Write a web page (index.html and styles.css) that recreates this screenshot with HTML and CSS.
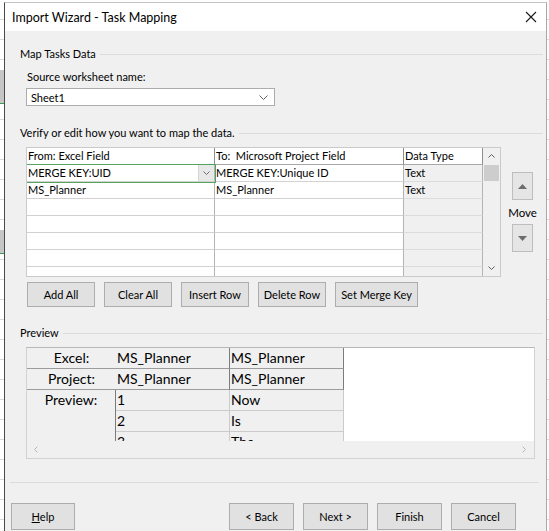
FILE: index.html
```html
<!DOCTYPE html>
<html lang="en">
<head>
  <meta charset="UTF-8" />
  <title>Import Wizard - Task Mapping</title>
  <link rel="stylesheet" href="styles.css">
</head>
<body>
  <div class="window">
    <div class="titlebar">
      <span class="title">Import Wizard - Task Mapping</span>
      <svg class="close" width="12" height="12" viewBox="0 0 12 12">
        <path d="M1 1 L11 11 M11 1 L1 11" stroke="#1a1a1a" stroke-width="1.1" fill="none"/>
      </svg>
    </div>

    <div class="content">
      <div class="group"><span>Map Tasks Data</span></div>
      <div class="field-label">Source worksheet name:</div>
      <div class="select">
        <span>Sheet1</span>
        <svg width="9" height="5" viewBox="0 0 9 5"><path d="M0.5 0.5 L4.5 4.5 L8.5 0.5" stroke="#606060" fill="none"/></svg>
      </div>

      <div class="group group-verify"><span>Verify or edit how you want to map the data.</span></div>

      <div class="map-area">
        <div class="grid">
          <table class="map-table">
            <colgroup>
              <col style="width: 188px">
              <col style="width: 189px">
              <col style="width: 79px">
            </colgroup>
            <thead>
              <tr>
                <th>From: Excel Field</th>
                <th>To:&nbsp; Microsoft Project Field</th>
                <th class="type">Data Type</th>
              </tr>
            </thead>
            <tbody>
              <tr>
                <td class="combo">
                  <div class="combo-box">
                    <span>MERGE KEY:UID</span>
                    <span class="combo-btn">
                      <svg width="7" height="4" viewBox="0 0 7 4"><path d="M0.5 0.5 L3.5 3.5 L6.5 0.5" stroke="#707070" fill="none"/></svg>
                    </span>
                  </div>
                </td>
                <td>MERGE KEY:Unique ID</td>
                <td class="type">Text</td>
              </tr>
              <tr><td>MS_Planner</td><td>MS_Planner</td><td class="type">Text</td></tr>
              <tr><td></td><td></td><td class="type"></td></tr>
              <tr><td></td><td></td><td class="type"></td></tr>
              <tr><td></td><td></td><td class="type"></td></tr>
              <tr><td></td><td></td><td class="type"></td></tr>
              <tr><td></td><td></td><td class="type"></td></tr>
            </tbody>
          </table>
          <div class="vscroll">
            <div class="arrow">
              <svg width="7" height="4" viewBox="0 0 7 4"><path d="M0.5 3.5 L3.5 0.5 L6.5 3.5" stroke="#606060" fill="none"/></svg>
            </div>
            <div class="thumb"></div>
            <div class="track"></div>
            <div class="arrow">
              <svg width="7" height="4" viewBox="0 0 7 4"><path d="M0.5 0.5 L3.5 3.5 L6.5 0.5" stroke="#606060" fill="none"/></svg>
            </div>
          </div>
        </div>

        <div class="move">
          <button class="move-btn">
            <svg width="9" height="5" viewBox="0 0 9 5"><path d="M0 5 L4.5 0 L9 5 Z" fill="#6d6d6d"/></svg>
          </button>
          <span class="move-label">Move</span>
          <button class="move-btn">
            <svg width="9" height="5" viewBox="0 0 9 5"><path d="M0 0 L4.5 5 L9 0 Z" fill="#6d6d6d"/></svg>
          </button>
        </div>
      </div>

      <div class="grid-buttons">
        <button class="btn">Add All</button>
        <button class="btn">Clear All</button>
        <button class="btn">Insert Row</button>
        <button class="btn">Delete Row</button>
        <button class="btn btn-wide">Set Merge Key</button>
      </div>

      <div class="group group-preview"><span>Preview</span></div>

      <div class="preview">
        <div class="preview-view">
          <table class="prev-table">
            <colgroup>
              <col style="width: 89px">
              <col style="width: 114px">
              <col style="width: 114px">
            </colgroup>
            <tr class="head">
              <td class="label">Excel:</td>
              <td class="sep">MS_Planner</td>
              <td class="sep">MS_Planner</td>
            </tr>
            <tr class="head">
              <td class="label">Project:</td>
              <td class="sep">MS_Planner</td>
              <td class="sep">MS_Planner</td>
            </tr>
            <tr>
              <td class="label side" rowspan="3">Preview:</td>
              <td>1</td>
              <td>Now</td>
            </tr>
            <tr><td>2</td><td>Is</td></tr>
            <tr><td>3</td><td>The</td></tr>
          </table>
        </div>
        <div class="hscroll">
          <svg width="4" height="7" viewBox="0 0 4 7"><path d="M3.5 0.5 L0.5 3.5 L3.5 6.5" stroke="#b8b8b8" fill="none"/></svg>
          <svg width="4" height="7" viewBox="0 0 4 7"><path d="M0.5 0.5 L3.5 3.5 L0.5 6.5" stroke="#b8b8b8" fill="none"/></svg>
        </div>
      </div>

      <div class="separator"></div>

      <div class="footer">
        <button class="btn btn-footer"><u>H</u>elp</button>
        <button class="btn btn-footer push">&lt; Back</button>
        <button class="btn btn-footer">Next &gt;</button>
        <button class="btn btn-footer">Finish</button>
        <button class="btn btn-footer">Cancel</button>
      </div>
    </div>
  </div>
</body>
</html>
```

FILE: styles.css
```css
html, body {
  height: 531px;
  overflow: hidden;
}

body {
  margin: 0;
  font-family: Lato, "Noto Sans", sans-serif;
  font-size: 11px;
  color: #000;
  /* excel sheet peeking out behind the dialog */
  background:
    linear-gradient(#c6c6c6, #c6c6c6) 0 70px / 4px 33px no-repeat,
    linear-gradient(#3f9b4f, #3f9b4f) 0 103px / 4px 1px no-repeat,
    linear-gradient(#c6c6c6, #c6c6c6) 0 230px / 4px 23px no-repeat,
    linear-gradient(#3f9b4f, #3f9b4f) 0 253px / 4px 1px no-repeat,
    repeating-linear-gradient(#fff 0, #fff 19px, #d9d9d9 19px, #d9d9d9 20px);
}

.window {
  margin: 2px 2px 0 4px;
  height: 529px;
  border-top: 1px solid #c4c4c4;
  border-left: 1px solid #4a4a4a;
  border-right: 1px solid #a8a8a8;
  display: flex;
  flex-direction: column;
}

.titlebar {
  height: 28px;
  flex: none;
  background: #fff;
  display: flex;
  align-items: center;
  justify-content: space-between;
  padding: 0 9px 0 7px;
}

.title {
  font-size: 12.5px;
}

.content {
  flex: 1;
  background: #f0f0f0;
  padding: 15px 3px 0 15px;
}

/* group headings with a rule running to the right */
.group {
  display: flex;
  align-items: center;
  line-height: 16px;
}

.group::after {
  content: "";
  flex: 1;
  height: 1px;
  margin-left: 4px;
  background: #dcdcdc;
}

.field-label {
  margin: 7px 0 0 7px;
  line-height: 16px;
}

.select {
  margin: 3px 0 0 6px;
  width: 249px;
  height: 18px;
  box-sizing: border-box;
  background: #fff;
  border: 1px solid #acacac;
  display: flex;
  align-items: center;
  justify-content: space-between;
  padding: 0 6px 0 4px;
}

.group-verify {
  margin-top: 19px;
}

.map-area {
  margin: 6px 0 0 6px;
  display: flex;
}

.grid {
  width: 475px;
  height: 130px;
  box-sizing: border-box;
  border: 1px solid #cacaca;
  background: #fff;
  display: flex;
  overflow: hidden;
}

.map-table {
  border-collapse: separate;
  border-spacing: 0;
  table-layout: fixed;
  width: 456px;
  flex: none;
  align-self: flex-start;
}

.map-table th,
.map-table td {
  height: 16px;
  line-height: 16px;
  padding: 0 0 0 1px;
  border-right: 1px solid #b4b4b4;
  border-bottom: 1px solid #d2d2d2;
  white-space: nowrap;
  overflow: hidden;
  text-align: left;
  font-weight: normal;
}

.map-table th {
  background: #fff;
  border-bottom-color: #a8a8a8;
  border-right-color: #8e8e8e;
}

.map-table td.type {
  background: #f0f0f0;
  border-bottom-color: #dcdcdc;
}

.map-table td.combo {
  padding: 0;
  outline: 1px solid #55a35f;
}

.combo-box {
  display: flex;
  justify-content: space-between;
  padding-left: 1px;
}

.combo-btn {
  width: 15px;
  height: 16px;
  background: #e8e8e8;
  border-left: 1px solid #d6d6d6;
  display: flex;
  align-items: center;
  justify-content: center;
}

.vscroll {
  width: 17px;
  flex: none;
  background: #f0f0f0;
  display: flex;
  flex-direction: column;
}

.vscroll .arrow {
  height: 16px;
  display: flex;
  align-items: center;
  justify-content: center;
}

.vscroll .thumb {
  height: 16px;
  margin: 1px 1px 0 1px;
  background: #cdcdcd;
}

.vscroll .track {
  flex: 1;
}

.move {
  width: 27px;
  margin-left: 8px;
  padding-top: 25px;
  display: flex;
  flex-direction: column;
  align-items: center;
}

.move-btn {
  width: 21px;
  height: 28px;
  padding: 0;
  background: #e5e5e5;
  border: 1px solid #bdbdbd;
  display: flex;
  align-items: center;
  justify-content: center;
}

.move-label {
  line-height: 16px;
  margin: 5px 0 3px;
  font-size: 11.5px;
}

.btn {
  font-family: inherit;
  font-size: 11px;
  color: #000;
  background: #e1e1e1;
  border: 1px solid #adadad;
  padding: 0;
  box-sizing: border-box;
}

.grid-buttons {
  margin: 5px 0 0 7px;
  display: flex;
  gap: 9px;
}

.grid-buttons .btn {
  width: 68px;
  height: 25px;
}

.grid-buttons .btn-wide {
  width: 83px;
}

.group-preview {
  margin-top: 18px;
}

.preview {
  margin: 6px 0 0 6px;
  width: 509px;
  height: 112px;
  box-sizing: border-box;
  border: 1px solid #d2d2d2;
  border-top-color: #b8b8b8;
  background: #fff;
  display: flex;
  flex-direction: column;
}

.preview-view {
  flex: 1;
  overflow: hidden;
}

.prev-table {
  border-collapse: separate;
  border-spacing: 0;
  table-layout: fixed;
  width: 317px;
  font-size: 14px;
}

.prev-table td {
  height: 20px;
  line-height: 20px;
  padding: 0 0 0 1px;
  background: #f0f0f0;
  border-bottom: 1px solid #cbcbcb;
  border-right: 1px solid #cbcbcb;
  white-space: nowrap;
  overflow: hidden;
}

.prev-table .head td {
  border-bottom-color: #9c9c9c;
}

.prev-table .head td.sep {
  border-right-color: #7c7c7c;
}

.prev-table td.label {
  text-align: center;
  padding: 0;
  border-right: none;
}

.prev-table td.side {
  vertical-align: top;
  border-bottom: none;
  border-right: 1px solid #7c7c7c;
}

.hscroll {
  height: 17px;
  flex: none;
  background: #f0f0f0;
  display: flex;
  align-items: center;
  justify-content: space-between;
  padding: 0 8px 0 7px;
}

.separator {
  margin: 23px 0 0 -10px;
  width: 529px;
  height: 1px;
  background: #dcdcdc;
}

.footer {
  margin: 20px 0 0 -9px;
  width: 505px;
  display: flex;
  gap: 9px;
}

.btn-footer {
  width: 65px;
  height: 27px;
}

.footer .btn-footer:first-child {
  width: 64px;
}

.push {
  margin-left: auto;
}
```
